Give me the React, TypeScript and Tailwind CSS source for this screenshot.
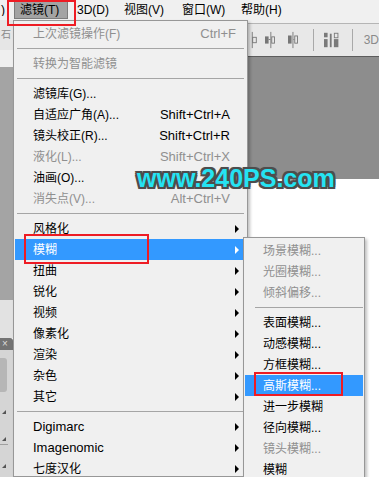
import React from "react";

type Item =
  | { label: string; shortcut?: string; sub?: boolean; disabled?: boolean; active?: boolean; latin?: boolean; wide?: boolean }
  | "sep";

const mainItems: Item[] = [
  { label: "上次滤镜操作(F)", shortcut: "Ctrl+F", disabled: true, wide: true },
  "sep",
  { label: "转换为智能滤镜", disabled: true },
  "sep",
  { label: "滤镜库(G)..." },
  { label: "自适应广角(A)...", shortcut: "Shift+Ctrl+A" },
  { label: "镜头校正(R)...", shortcut: "Shift+Ctrl+R" },
  { label: "液化(L)...", shortcut: "Shift+Ctrl+X", disabled: true },
  { label: "油画(O)..." },
  { label: "消失点(V)...", shortcut: "Alt+Ctrl+V", disabled: true },
  "sep",
  { label: "风格化", sub: true },
  { label: "模糊", sub: true, active: true },
  { label: "扭曲", sub: true },
  { label: "锐化", sub: true },
  { label: "视频", sub: true },
  { label: "像素化", sub: true },
  { label: "渲染", sub: true },
  { label: "杂色", sub: true },
  { label: "其它", sub: true },
  "sep",
  { label: "Digimarc", sub: true, latin: true },
  { label: "Imagenomic", sub: true, latin: true },
  { label: "七度汉化", sub: true },
];

const blurItems: Item[] = [
  { label: "场景模糊...", disabled: true },
  { label: "光圈模糊...", disabled: true },
  { label: "倾斜偏移...", disabled: true },
  "sep",
  { label: "表面模糊..." },
  { label: "动感模糊..." },
  { label: "方框模糊..." },
  { label: "高斯模糊...", active: true },
  { label: "进一步模糊" },
  { label: "径向模糊..." },
  { label: "镜头模糊...", disabled: true },
  { label: "模糊" },
];

function Arrow({ white }: { white?: boolean }) {
  return (
    <span
      className={
        white
          ? "ml-auto mr-[7px] h-0 w-0 border-y-[4px] border-l-[4px] border-y-transparent border-l-white"
          : "ml-auto mr-[7px] h-0 w-0 border-y-[4px] border-l-[4px] border-y-transparent border-l-black"
      }
    />
  );
}

function MenuList({ items, sepClass }: { items: Item[]; sepClass: string }) {
  return (
    <>
      {items.map((it, i) => {
        if (it === "sep") {
          return (
            <div key={i} className="flex h-[9px] items-center">
              <div className={sepClass} />
            </div>
          );
        }
        const color = it.active ? "text-white" : it.disabled ? "text-[#8f8f8f]" : "text-black";
        return (
          <div
            key={i}
            className={
              it.active
                ? "mx-[1px] flex h-[21px] items-center bg-[#3399ff] pl-[18px] leading-none"
                : "mx-[1px] flex h-[21px] items-center pl-[18px] leading-none"
            }
          >
            <span className={`${color} ${it.latin ? "text-[13px]" : "text-[12px]"} whitespace-nowrap`}>
              {it.label}
            </span>
            {it.shortcut && (
              <span
                className={`ml-auto whitespace-nowrap text-[13px] ${color} ${it.wide ? "mr-[10px]" : "mr-[16px]"}`}
              >
                {it.shortcut}
              </span>
            )}
            {it.sub && <Arrow white={it.active} />}
          </div>
        );
      })}
    </>
  );
}

function MenuBar() {
  return (
    <div className="flex h-[20px] items-center bg-[#f0f0f0] text-[12px] leading-none">
      <span className="w-[14px] overflow-hidden whitespace-nowrap pl-[1px]">)</span>
      <span className="mt-[1px] flex h-[18px] w-[54px] items-center self-start border border-[#7c7c7c] bg-[#a3a3a3] pl-[5px]">
        滤镜(T)
      </span>
      <span className="ml-[3px] w-[47px] pl-[6px]">3D(D)</span>
      <span className="w-[58px] pl-[6px]">视图(V)</span>
      <span className="w-[59px] pl-[6px]">窗口(W)</span>
      <span className="pl-[6px]">帮助(H)</span>
    </div>
  );
}

function LeftStrip() {
  return (
    <div className="flex w-[13px] shrink-0 flex-col">
      <div className="flex h-[30px] items-center overflow-hidden bg-[#e6e6e6] pl-[1px]">
        <span className="text-[10px] leading-none text-[#8a8a8a]">石</span>
      </div>
      <div className="h-[17px] bg-[#efefef]" />
      <div className="h-[233px] bg-[#a4a4a4]" />
      <div className="h-[38px] bg-[#e2e2e2]" />
      <div className="flex h-[12px] items-center rounded-tr-[3px] bg-[#737373] pl-[2px] text-[10px] leading-none text-[#dcdcdc]">
        ×
      </div>
      <div className="flex flex-1 flex-col bg-[#d5d5d5]">
        <div className="mt-[8px] h-[34px] w-[7px] rounded-r-[3px] bg-[#b6b6b6]" />
        <div className="mt-[18px] ml-[2px] h-0 w-0 border-b-[4px] border-l-[4px] border-l-transparent border-b-[#555]" />
        <div className="mt-[23px] ml-[2px] h-0 w-0 border-b-[4px] border-l-[4px] border-l-transparent border-b-[#555]" />
        <div className="mt-[3px] h-px w-[8px] bg-[#a0a0a0]" />
        <div className="mt-[19px] ml-[2px] h-0 w-0 border-b-[4px] border-l-[4px] border-l-transparent border-b-[#555]" />
      </div>
    </div>
  );
}

function OptionIcons() {
  return (
    <div className="flex h-full items-center">
      <svg width="10" height="18" viewBox="0 0 10 18" className="ml-[2px]">
        <rect x="2" y="0" width="1" height="18" fill="#777" />
        <rect x="3" y="6" width="4" height="6" fill="none" stroke="#777" />
      </svg>
      <svg width="12" height="18" viewBox="0 0 12 18" className="ml-[6px]">
        <rect x="0" y="5" width="4" height="8" fill="#777" />
        <rect x="4" y="8" width="2" height="1" fill="#777" />
        <rect x="6" y="0" width="1" height="18" fill="#777" />
        <rect x="7.5" y="5.5" width="3" height="7" fill="none" stroke="#777" />
      </svg>
      <svg width="12" height="18" viewBox="0 0 12 18" className="ml-[12px]">
        <rect x="0" y="4" width="4" height="9" fill="#777" />
        <rect x="5" y="0" width="1" height="18" fill="#777" />
        <rect x="7.5" y="4.5" width="3" height="8" fill="none" stroke="#777" />
        <rect x="6" y="8" width="1" height="1" fill="#777" />
      </svg>
      <div className="ml-[14px] h-[22px] w-px bg-[#a9a9a9]" />
      <svg width="17" height="18" viewBox="0 0 17 18" className="ml-[11px]">
        <rect x="0" y="1" width="4" height="5" fill="#7a7a7a" />
        <rect x="0" y="8" width="4" height="9" fill="#7a7a7a" />
        <rect x="6.5" y="2" width="2" height="15" fill="#7a7a7a" />
        <rect x="11.5" y="1.5" width="4" height="5" fill="none" stroke="#7a7a7a" />
        <rect x="11" y="8" width="5" height="9" fill="#7a7a7a" />
      </svg>
      <div className="ml-[12px] h-[22px] w-px bg-[#a9a9a9]" />
      <span className="ml-[11px] text-[12px] text-[#8a8a8a]">3D</span>
    </div>
  );
}

function Workspace() {
  return (
    <div className="flex min-w-0 flex-1 flex-col">
      <div className="h-[4px] border-b border-[#b5b5b5] bg-[#f0f0f0]" />
      <div className="h-[33px] border-b border-[#5c5c5c] bg-[#e8e8e8]">
        <OptionIcons />
      </div>
      <div className="h-[122px] bg-[#8d8d8d]" />
      <div className="flex-1 bg-white" />
    </div>
  );
}

export default function App() {
  return (
    <div className="relative h-[477px] w-[379px] overflow-hidden bg-white font-['Liberation_Sans','Noto_Sans_CJK_SC',sans-serif] text-black">
      <MenuBar />
      <div className="flex h-[457px]">
        <LeftStrip />
        <div className="z-10 w-[235px] shrink-0 border border-[#979797] bg-[#f0f0f0] pt-[2px] shadow-[2px_2px_3px_rgba(0,0,0,0.25)]">
          <MenuList items={mainItems} sepClass="mx-[3px] h-px flex-1 bg-[#a5a5a5]" />
        </div>
        <Workspace />
      </div>

      {/* 模糊 submenu */}
      <div className="absolute left-[243px] top-[237px] z-20 w-[122px] border border-[#979797] bg-[#f0f0f0] pt-[2px] shadow-[2px_2px_3px_rgba(0,0,0,0.25)]">
        <MenuList items={blurItems} sepClass="ml-[11px] mr-[1px] h-px flex-1 bg-[#a5a5a5]" />
      </div>

      {/* red marks */}
      <div className="absolute left-[7px] top-0 z-30 h-[26px] w-[69px] border-2 border-[#ee1c24]" />
      <div className="absolute left-[24px] top-[234px] z-30 h-[30px] w-[125px] border-2 border-[#ee1c24]" />
      <div className="absolute left-[254px] top-[372px] z-30 h-[24px] w-[89px] border-2 border-[#ee1c24]" />

      {/* watermark */}
      <div className="absolute left-[137px] top-[166px] z-40 font-['Liberation_Sans',sans-serif] text-[25px] font-bold leading-none text-[#25e3f2] [text-shadow:2px_0_#4d4d4d,-2px_0_#4d4d4d,0_2px_#4d4d4d,0_-2px_#4d4d4d,2px_2px_#4d4d4d,-2px_-2px_#4d4d4d,2px_-2px_#4d4d4d,-2px_2px_#4d4d4d,0_0_3px_#4d4d4d]">
        www.240PS.com
      </div>
    </div>
  );
}
